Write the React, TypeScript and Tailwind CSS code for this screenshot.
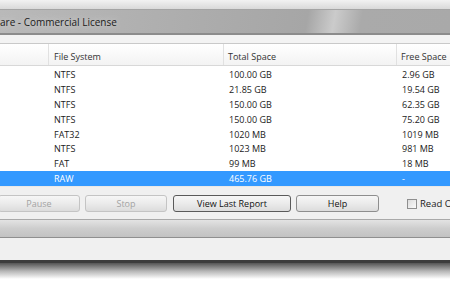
import React from "react";

type Row = { fs: string; total: string; free: string; selected?: boolean };

const rows: Row[] = [
  { fs: "NTFS", total: "100.00 GB", free: "2.96 GB" },
  { fs: "NTFS", total: "21.85 GB", free: "19.54 GB" },
  { fs: "NTFS", total: "150.00 GB", free: "62.35 GB" },
  { fs: "NTFS", total: "150.00 GB", free: "75.20 GB" },
  { fs: "FAT32", total: "1020 MB", free: "1019 MB" },
  { fs: "NTFS", total: "1023 MB", free: "981 MB" },
  { fs: "FAT", total: "99 MB", free: "18 MB" },
  { fs: "RAW", total: "465.76 GB", free: "-", selected: true },
];

function Button({
  label,
  className,
  disabled,
  primary,
}: {
  label: string;
  className: string;
  disabled?: boolean;
  primary?: boolean;
}) {
  const border = primary
    ? "border-[#5a5a5a]"
    : disabled
      ? "border-[#c4c4c4]"
      : "border-[#8e8e8e]";
  return (
    <div
      className={`${className} ${border} flex h-[17px] shrink-0 items-center justify-center rounded-[3px] border bg-gradient-to-b from-[#f6f6f6] via-[#ebebeb] to-[#dcdcdc] text-[9px] ${
        disabled ? "text-[#a3a3a3]" : "text-[#111]"
      }`}
    >
      {label}
    </div>
  );
}

export default function App() {
  return (
    <div className="relative h-[281px] w-[450px] overflow-hidden bg-white font-['Open_Sans',sans-serif]">
      {/* window frame top */}
      <div className="h-[10px] bg-gradient-to-b from-[#f2f2f2] to-[#d9d9d9] border-b border-[#a4a4a4]" />

      {/* title bar */}
      <div className="flex h-[25px] items-center bg-[linear-gradient(100deg,#b9b9b9_0%,#acacac_45%,#a6a6a6_68%,#cbcbcb_74%,#aaaaaa_80%,#a9a9a9_100%)] border-b-2 border-[#8c8c8c]">
        <span className="whitespace-nowrap text-[10px] leading-none text-[#1b1b1b] [text-shadow:0_0_6px_#d8d8d8]">
          are - Commercial License
        </span>
      </div>

      {/* toolbar strip */}
      <div className="h-[9px] bg-[#f3f3f3] border-b border-[#c9c9c9]" />

      {/* list */}
      <div className="bg-white text-[9px] text-[#1a1a1a]">
        <div className="grid h-[22px] grid-cols-[49px_175px_173px_1fr] border-b border-[#d8d8d8] bg-gradient-to-b from-white to-[#f3f3f3]">
          <div className="border-r border-[#e1e1e1]" />
          <div className="border-r border-[#e1e1e1] pl-[5px] pt-[7px] leading-[11px] text-[#333]">File System</div>
          <div className="border-r border-[#e1e1e1] pl-[4px] pt-[7px] leading-[11px] text-[#333]">Total Space</div>
          <div className="pl-[4px] pt-[7px] leading-[11px] text-[#333]">Free Space</div>
        </div>
        <div className="pt-[1px]">
          {rows.map((r, i) => (
            <div
              key={i}
              className={`grid h-[14.9px] grid-cols-[49px_175px_173px_1fr] items-center leading-none ${
                r.selected ? "bg-[#3399ff] text-white" : ""
              }`}
            >
              <div />
              <div className="pl-[5px]">{r.fs}</div>
              <div className="pl-[5px]">{r.total}</div>
              <div className="pl-[5px]">{r.free}</div>
            </div>
          ))}
        </div>
      </div>

      {/* buttons area */}
      <div className="border-t border-[#e8e8e8] bg-[#f0f0f0] pt-[8px] pb-[7px]">
        <div className="flex h-[17px] items-center">
          <Button label="Pause" className="-ml-[2px] w-[82px]" disabled />
          <Button label="Stop" className="ml-[5px] w-[82px]" disabled />
          <Button label="View Last Report" className="ml-[6px] w-[118px]" primary />
          <Button label="Help" className="ml-[5px] w-[83px]" />
          <div className="ml-[28px] flex shrink-0 items-center gap-[3px] text-[9.5px] text-[#1a1a1a]">
            <div className="h-[10px] w-[10px] shrink-0 border border-[#8f8f8f] bg-gradient-to-br from-[#dcdcdc] to-[#fbfbfb]" />
            <span className="leading-none whitespace-nowrap">Read Only</span>
          </div>
        </div>
      </div>

      {/* status bar */}
      <div className="h-px bg-[#a9a9a9]" />
      <div className="h-[18px] bg-gradient-to-b from-[#e3e3e3] via-[#cdcdcd] to-[#c2c2c2] border-b border-[#8f8f8f]" />
      <div className="h-[22px] bg-[#f0f0f0]" />

      {/* window bottom edge and shadow */}
      <div className="h-[3px] bg-[#3c3c3c]" />
      <div className="h-[16px] bg-gradient-to-b from-[#555555] via-[#b5b5b5] to-white" />
    </div>
  );
}
